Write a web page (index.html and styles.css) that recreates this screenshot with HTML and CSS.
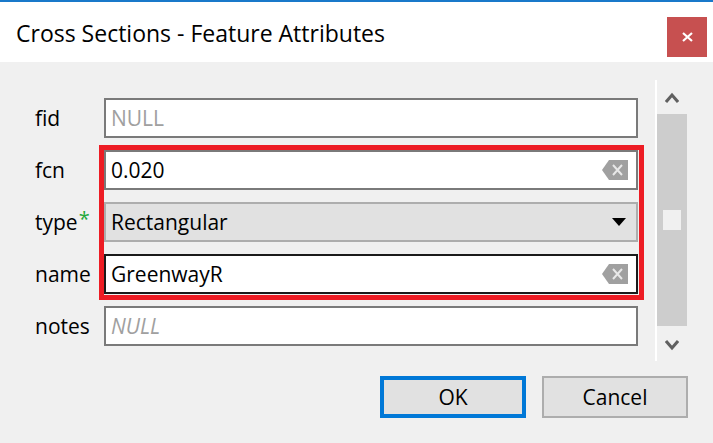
FILE: index.html
```html
<!DOCTYPE html>
<html>
<head>
<meta charset="utf-8">
<link rel="stylesheet" href="styles.css">
</head>
<body>
<div class="window">
  <div class="titlebar">
    <span class="title">Cross Sections - Feature Attributes</span>
    <div class="close"><svg width="11" height="10" viewBox="0 0 11 10"><path d="M1 1 L10 9 M10 1 L1 9" stroke="#fff" stroke-width="2.2" fill="none"/></svg></div>
  </div>
  <div class="main">
    <div class="scrollarea">
      <div class="form">
        <label class="lbl">fid</label>
        <div class="field"><span class="null">NULL</span></div>
        <label class="lbl">fcn</label>
        <div class="field"><span class="val">0.020</span><svg class="clear" width="26" height="20" viewBox="0 0 26 20"><path d="M0 10 L7 0 H26 V20 H7 Z" fill="#a0a0a0"/><path d="M11 5 L20 15 M20 5 L11 15" stroke="#e8e8e8" stroke-width="2" fill="none"/></svg></div>
        <label class="lbl">type<span class="req">*</span></label>
        <div class="field combo"><span class="val">Rectangular</span><svg class="arrow" width="14" height="9" viewBox="0 0 14 9"><path d="M0 0 H14 L7 8 Z" fill="#000"/></svg></div>
        <label class="lbl">name</label>
        <div class="field focused"><span class="val">GreenwayR</span><svg class="clear" width="26" height="20" viewBox="0 0 26 20"><path d="M0 10 L7 0 H26 V20 H7 Z" fill="#a0a0a0"/><path d="M11 5 L20 15 M20 5 L11 15" stroke="#e8e8e8" stroke-width="2" fill="none"/></svg></div>
        <label class="lbl">notes</label>
        <div class="field"><span class="null italic">NULL</span></div>
        <div class="highlight"></div>
      </div>
      <div class="vline"></div>
      <div class="scrollbar">
        <div class="sb-btn"><svg width="14" height="12" viewBox="0 0 14 12"><path d="M1 11 L7 4 L13 11" stroke="#606060" stroke-width="3" fill="none" stroke-linejoin="miter"/></svg></div>
        <div class="sb-track"><div class="sb-thumb"></div></div>
        <div class="sb-btn down"><svg width="14" height="12" viewBox="0 0 14 12"><path d="M1 1 L7 8 L13 1" stroke="#606060" stroke-width="3" fill="none"/></svg></div>
      </div>
    </div>
    <div class="buttons">
      <button class="btn default">OK</button>
      <button class="btn">Cancel</button>
    </div>
  </div>
</div>
</body>
</html>
```
FILE: styles.css
```css
html, body {
  margin: 0;
  padding: 0;
}
body {
  width: 713px;
  height: 443px;
  overflow: hidden;
  background: #f0f0f0;
  font-family: "Open Sans", "Noto Sans", sans-serif;
  font-size: 21px;
  color: #000;
}
.window {
  width: 713px;
  height: 443px;
  display: flex;
  flex-direction: column;
}
.titlebar {
  height: 60px;
  border-top: 2px solid #1979ca;
  background: #fff;
  display: flex;
  justify-content: space-between;
  align-items: flex-start;
  padding-left: 16px;
}
.title {
  margin-top: 17px;
  font-size: 23px;
  line-height: 28px;
  color: #000;
}
.close {
  margin-top: 15px;
  margin-right: 6px;
  width: 40px;
  height: 40px;
  background: #c75050;
  display: flex;
  align-items: center;
  justify-content: center;
}
.main {
  flex: 1;
  display: flex;
  flex-direction: column;
}
.scrollarea {
  margin-top: 18px;
  height: 281px;
  display: flex;
}
.form {
  position: relative;
  width: 620px;
  padding: 18px 0 0 35px;
  display: grid;
  grid-template-columns: 69px 534px;
  grid-auto-rows: 40px;
  row-gap: 12px;
  align-content: start;
}
.lbl {
  display: flex;
  align-items: center;
}
.req {
  color: #22a83a;
  font-size: 20px;
  align-self: flex-start;
  margin-top: 3px;
  margin-left: 1px;
}
.field {
  box-sizing: border-box;
  height: 40px;
  border: 2px solid #7a7a7a;
  background: #fff;
  display: flex;
  align-items: center;
  padding: 0 8px 0 5px;
}
.field .val, .field .null {
  flex: 1;
}
.null {
  color: #a0a0a0;
}
.italic {
  font-style: italic;
}
.combo {
  background: #e1e1e1;
  border-color: #adadad;
  padding-right: 10px;
}
.focused {
  border-color: #1a1a1a;
}
.highlight {
  position: absolute;
  left: 99px;
  top: 65px;
  width: 535px;
  height: 145px;
  border: 5px solid #ed1c24;
  pointer-events: none;
}
.vline {
  width: 2px;
  background: #fff;
}
.scrollbar {
  width: 30px;
  display: flex;
  flex-direction: column;
}
.sb-btn {
  height: 34px;
  display: flex;
  align-items: center;
  justify-content: center;
}
.sb-btn.down {
  height: 35px;
  align-items: flex-start;
  padding-top: 14px;
  box-sizing: border-box;
}
.sb-track {
  height: 212px;
  background: #cdcdcd;
  position: relative;
}
.sb-thumb {
  position: absolute;
  left: 6px;
  top: 96px;
  width: 18px;
  height: 20px;
  background: #f0f0f0;
}
.buttons {
  margin-top: 15px;
  padding-right: 25px;
  display: flex;
  justify-content: flex-end;
  gap: 16px;
}
.btn {
  box-sizing: border-box;
  width: 146px;
  height: 42px;
  background: #e1e1e1;
  border: 2px solid #adadad;
  font-family: "Open Sans", "Noto Sans", sans-serif;
  font-size: 21px;
  color: #000;
  padding: 0;
}
.btn.default {
  border: 4px solid #0078d7;
}
```
